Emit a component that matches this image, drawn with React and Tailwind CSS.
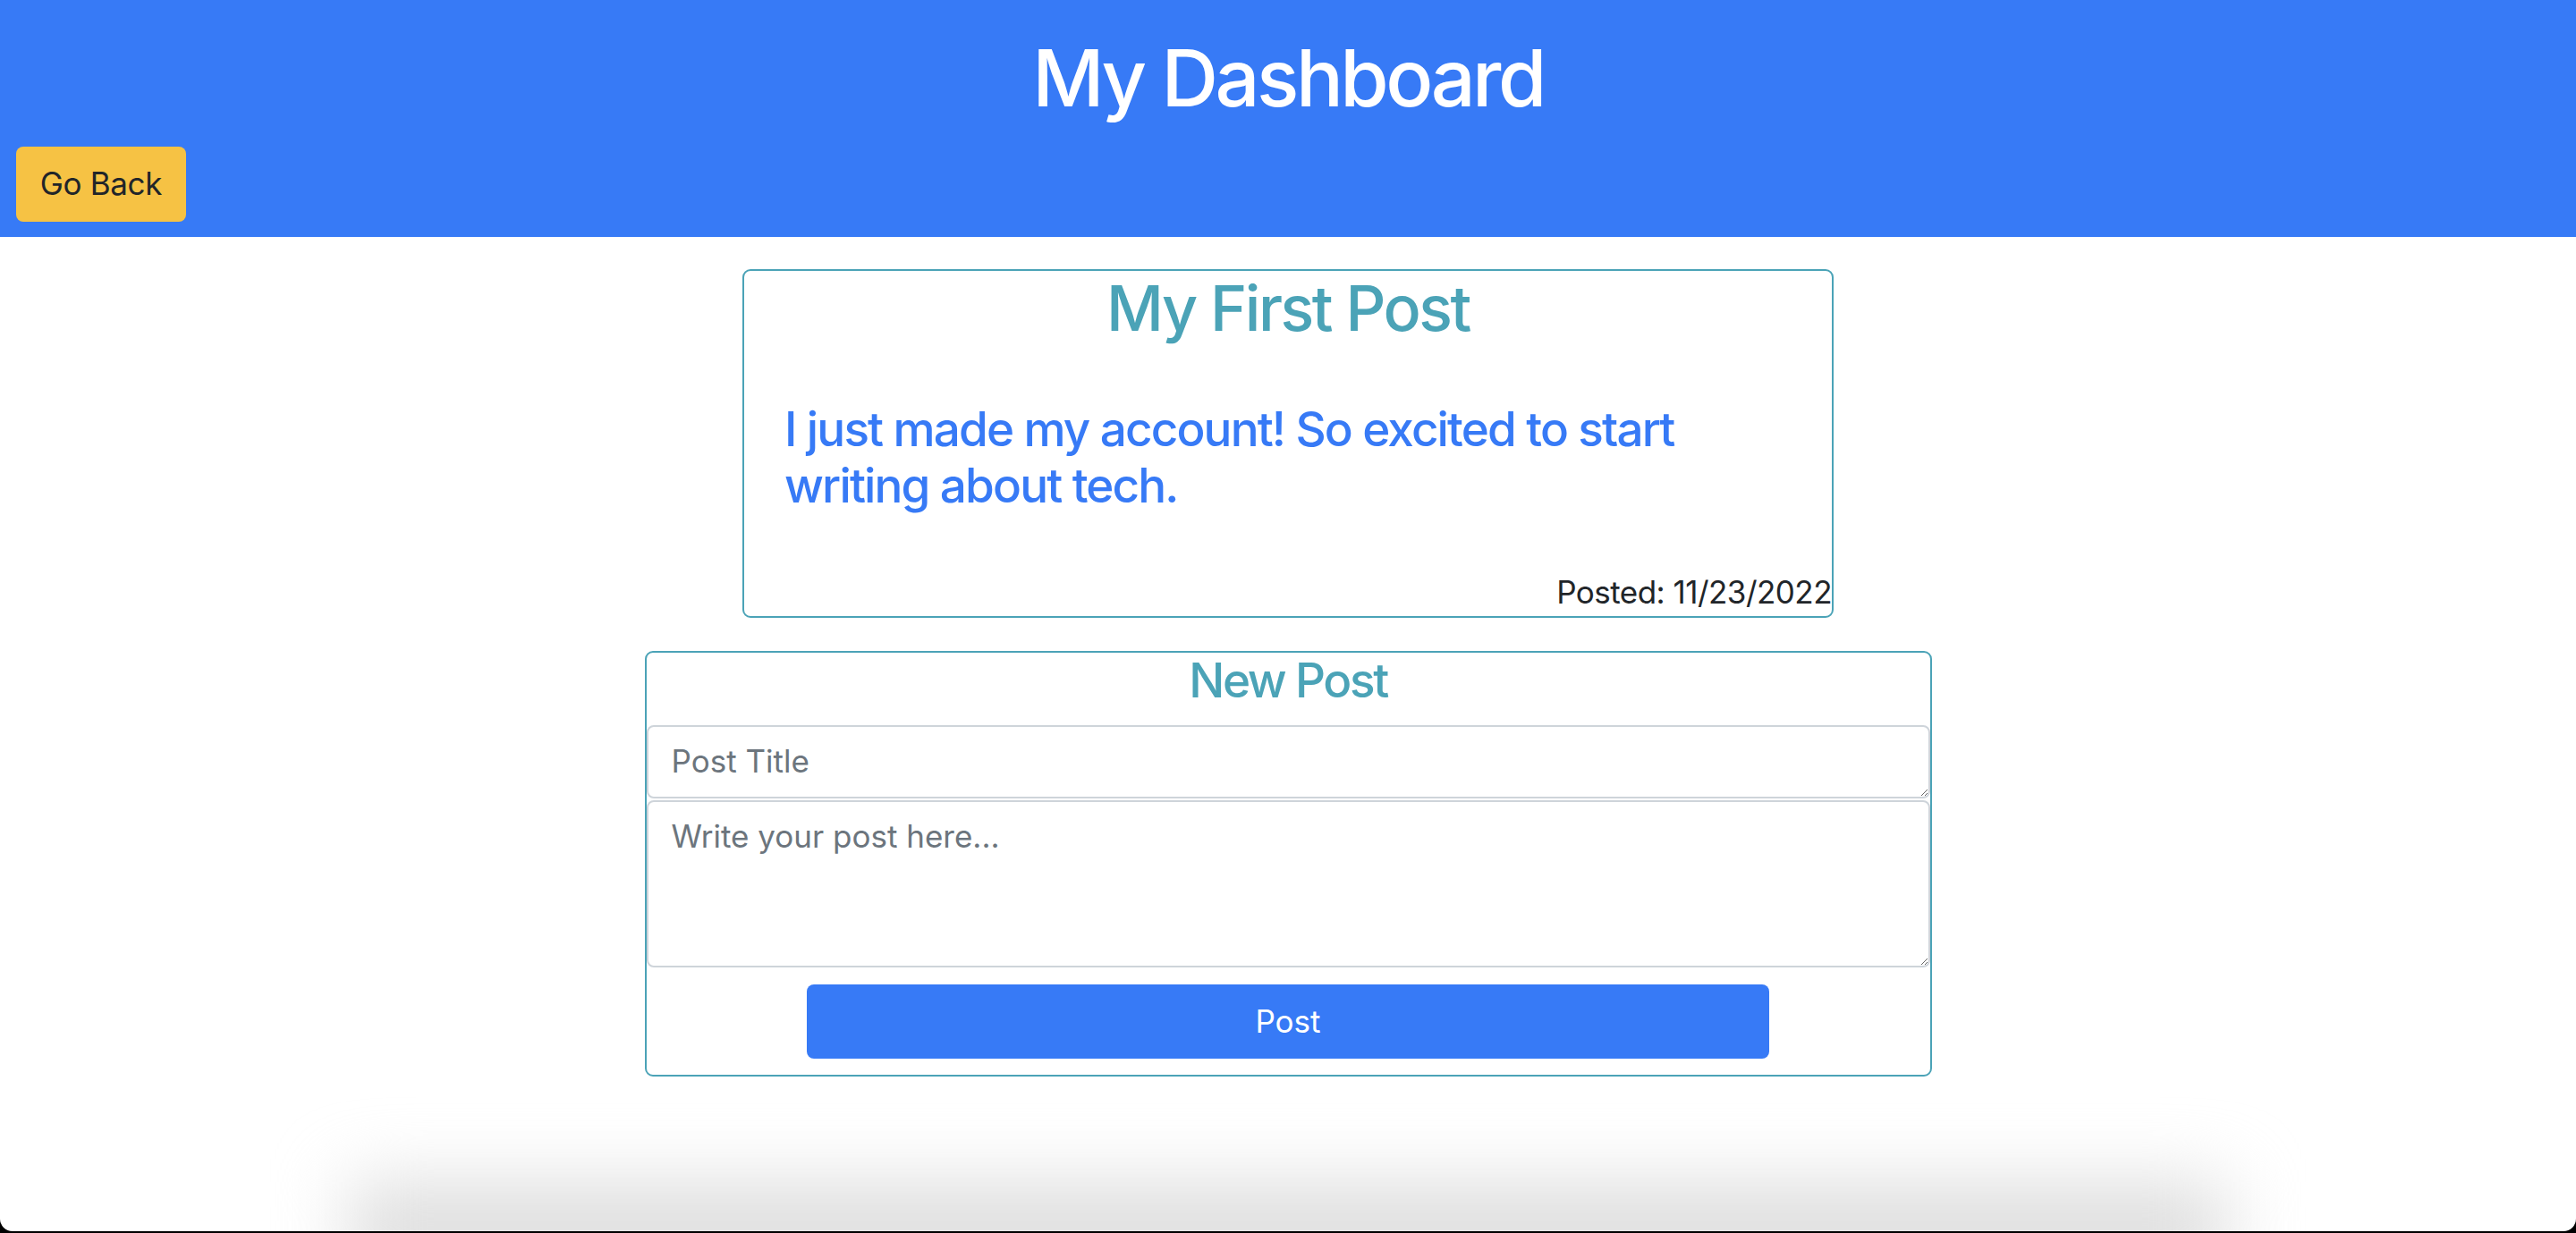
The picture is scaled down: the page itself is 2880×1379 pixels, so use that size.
const font = "font-['Inter','Liberation_Sans',sans-serif]";

const fieldCls =
    "block w-full border-2 border-[#ced4da] rounded-[8px] px-[26px] pt-[12px] pb-[8px] text-[35px] leading-[1.5] text-[#212529] placeholder:text-[#6c757d] bg-white focus:outline-none";

function Header() {
    return (
        <header className="bg-[#377af6] pt-[35px] pb-[17px]">
            <h1 className="text-center text-white text-[88px] leading-[1.2] font-medium tracking-[-0.04em]">
                My Dashboard
            </h1>
            <button className="mt-[23px] ml-[18px] w-[190px] h-[84px] rounded-[8px] bg-[#f6c244] text-[#212529] text-[35px] tracking-[-0.01em] flex items-center justify-center">
                Go Back
            </button>
        </header>
    );
}

function PostCard() {
    return (
        <article className="mx-auto mt-[36px] w-[1220px] h-[390px] border-2 border-[#4ba3b7] rounded-[9px] flex flex-col">
            <h2 className="text-center text-[#4ba3b7] text-[70px] leading-[1.2] font-medium tracking-[-0.035em]">
                My First Post
            </h2>
            <p className="mt-[62px] pl-[45px] max-w-[1100px] text-[#377af6] text-[53px] leading-[1.2] font-medium tracking-[-0.035em]">
                I just made my account! So excited to start writing about tech.
            </p>
            <p className="mt-auto text-right text-[#212529] text-[35px] leading-[1.5] tracking-[-0.015em]">
                Posted: 11/23/2022
            </p>
        </article>
    );
}

function NewPostForm() {
    return (
        <form
            className="mx-auto mt-[37px] w-[1439px] border-2 border-[#4ba3b7] rounded-[9px] flex flex-col"
            onSubmit={(e) => e.preventDefault()}
        >
            <h4 className="text-center text-[#4ba3b7] text-[53px] leading-[1.2] font-medium tracking-[-0.045em]">
                New Post
            </h4>
            <textarea
                className={`${fieldCls} mt-[18px] h-[82px]`}
                placeholder="Post Title"
            />
            <textarea
                className={`${fieldCls} mt-[2px] h-[187px]`}
                placeholder="Write your post here..."
            />
            <button className="mx-auto mt-[19px] mb-[18px] w-3/4 h-[83px] rounded-[8px] bg-[#377af6] text-white text-[35px]">
                Post
            </button>
        </form>
    );
}

export default function App() {
    return (
        <div className={`bg-black h-[1379px] overflow-hidden ${font}`}>
            <div className="bg-white h-[1377px] rounded-b-[14px] overflow-hidden flex flex-col">
                <Header />
                <PostCard />
                <NewPostForm />
                <div className="mt-auto mx-auto w-[2100px] h-[110px] mb-[-55px] bg-[#dedede] blur-[40px] shrink-0" />
            </div>
        </div>
    );
}
